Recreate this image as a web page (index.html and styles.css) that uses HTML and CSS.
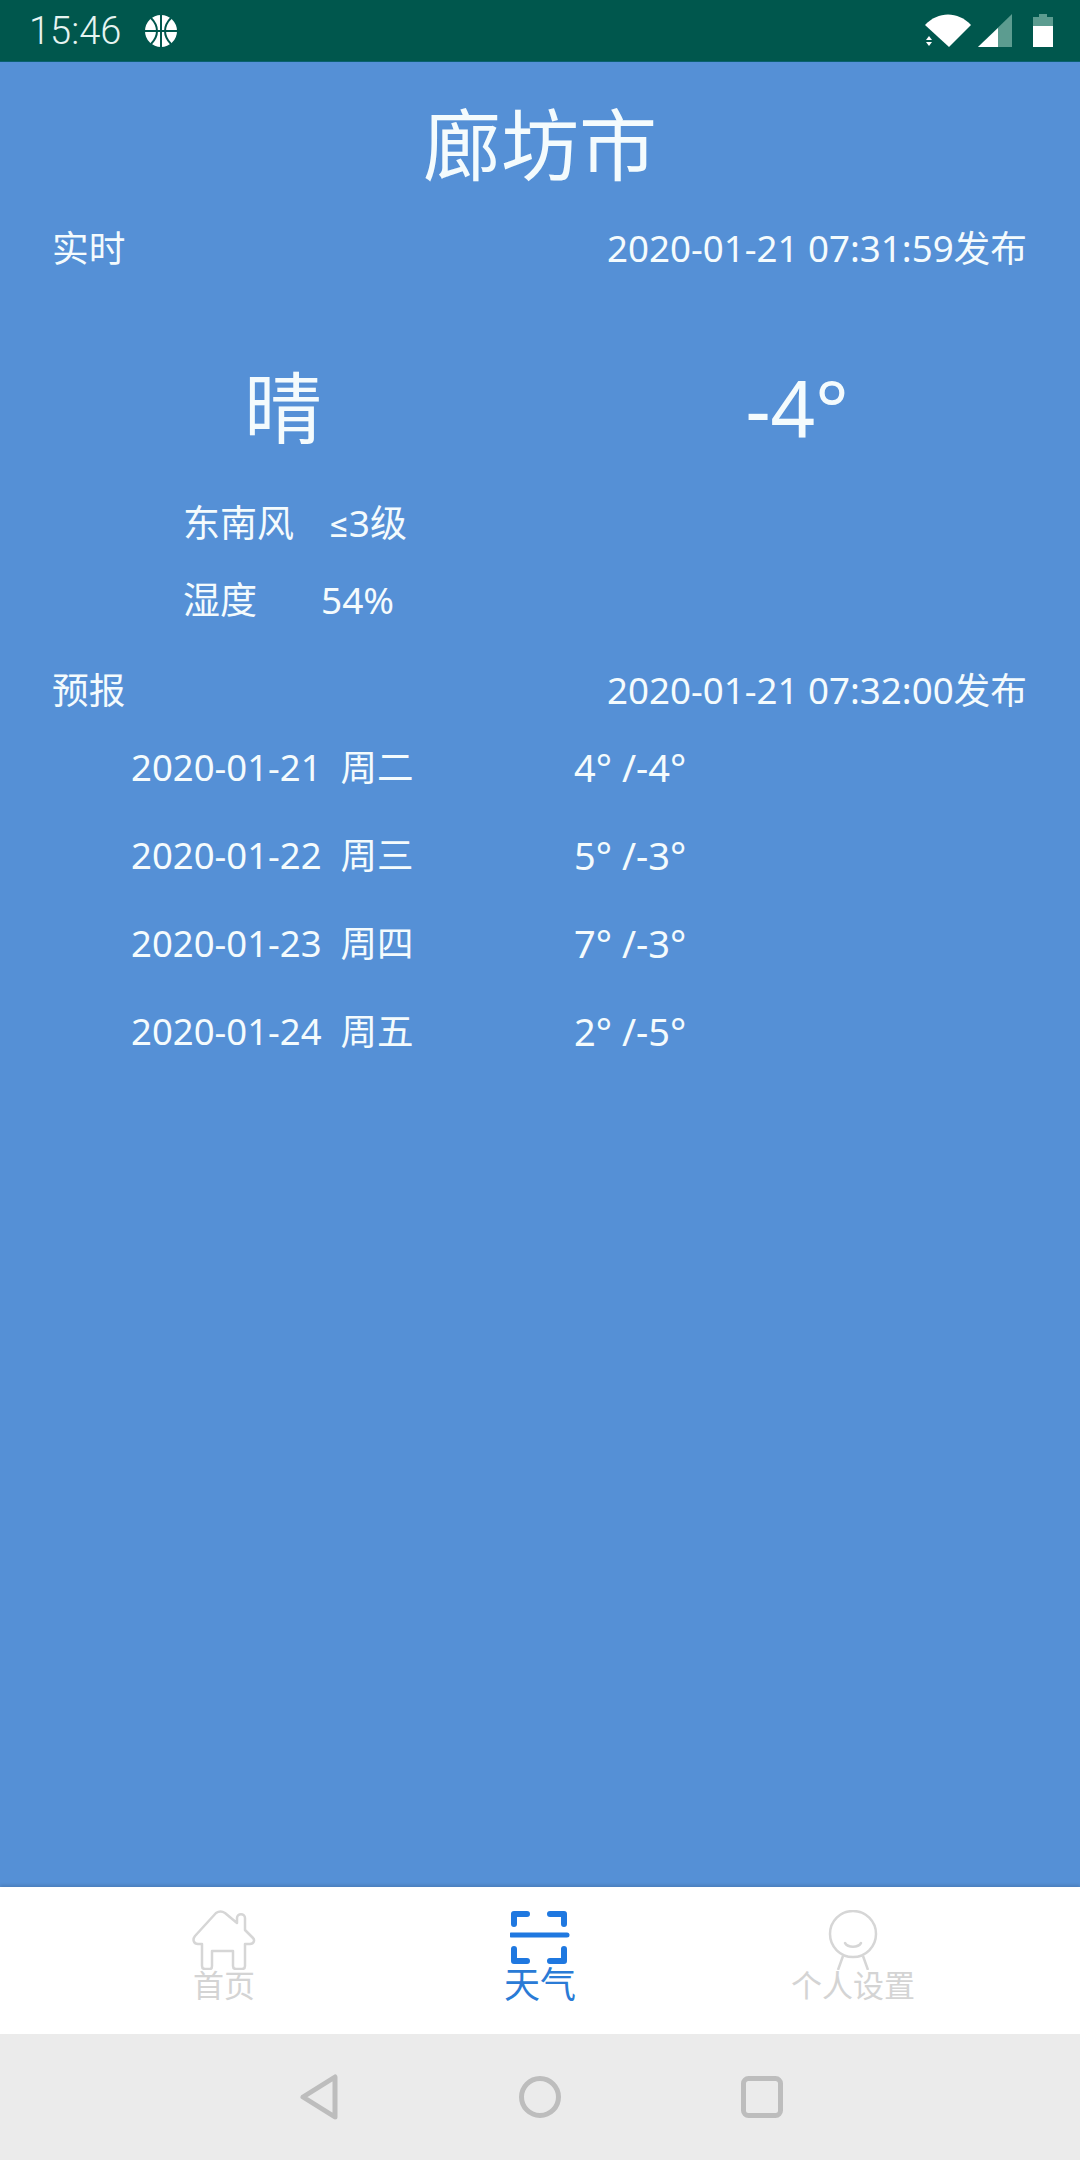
FILE: index.html
```html
<!DOCTYPE html>
<html lang="zh-CN">
<head>
    <meta charset="UTF-8">
    <meta name="viewport" content="width=device-width, initial-scale=1.0">
    <title>天气</title>
    <link rel="stylesheet" href="styles.css">
</head>
<body>
    <div class="status-bar">
        <div class="status-left">
            <span class="clock">15:46</span>
            <svg class="ball" width="32" height="32" viewBox="0 0 32 32">
                <circle cx="16" cy="16" r="16" fill="#fff"/>
                <path d="M16 0V32M0 16H32M6 3C11 8 12 12 12 16C12 20 11 24 6 29M26 3C21 8 20 12 20 16C20 20 21 24 26 29" fill="none" stroke="#00574d" stroke-width="2"/>
            </svg>
        </div>
        <div class="status-right">
            <svg class="wifi" width="46" height="33" viewBox="0 0 46 33">
                <path d="M0 11C13 -3 33 -3 46 11L24 33Z" fill="#fff"/>
                <path d="M0 25L4 20L8 25ZM0 28L8 28L4 33Z" fill="#00574d" stroke="#00574d" stroke-width="3"/>
                <path d="M1 26L4 22L7 26ZM1 28L7 28L4 32Z" fill="#fff"/>
            </svg>
            <svg class="signal" width="34" height="33" viewBox="0 0 34 33">
                <path d="M34 0V33H0Z" fill="#5c9c90"/>
                <path d="M20 14V33H0Z" fill="#fff"/>
            </svg>
            <svg class="battery" width="20" height="33" viewBox="0 0 20 33">
                <path d="M6 0H14V3H20V12H0V3H6Z" fill="#5c9c90"/>
                <rect y="12" width="20" height="21" fill="#fff"/>
            </svg>
        </div>
    </div>

    <div class="main">
        <h1 class="city">廊坊市</h1>

        <div class="head-row">
            <span>实时</span>
            <span>2020-01-21 07:31:59发布</span>
        </div>

        <div class="now">
            <div>晴</div>
            <div>-4°</div>
        </div>

        <div class="detail wind">
            <span>东南风</span>
            <span><span class="le">≤</span>3级</span>
        </div>
        <div class="detail humidity">
            <span>湿度</span>
            <span>54%</span>
        </div>

        <div class="head-row forecast-head">
            <span>预报</span>
            <span>2020-01-21 07:32:00发布</span>
        </div>

        <div class="forecast">
            <div class="day"><span class="day-date">2020-01-21&nbsp;&nbsp;周二</span><span class="day-temp">4° /-4°</span></div>
            <div class="day"><span class="day-date">2020-01-22&nbsp;&nbsp;周三</span><span class="day-temp">5° /-3°</span></div>
            <div class="day"><span class="day-date">2020-01-23&nbsp;&nbsp;周四</span><span class="day-temp">7° /-3°</span></div>
            <div class="day"><span class="day-date">2020-01-24&nbsp;&nbsp;周五</span><span class="day-temp">2° /-5°</span></div>
        </div>
    </div>

    <div class="tabbar">
        <div class="tab">
            <svg width="64" height="60" viewBox="-1 -1 64 60">
                <path d="M9 33V55C9 57 10 58 12 58H17C18 58 19 57 19 55V40H40V55C40 57 41 58 43 58H49C51 58 52 57 52 55V33H57C61 33 62 29 60 27L52 19V7C52 2 44 2 44 7V12L32 2C29 0 26 0 23 2L2 25C-1 29 1 33 5 33Z" fill="none" stroke="#d6d6d6" stroke-width="2.5" stroke-linejoin="round"/>
            </svg>
            <span class="tab-label">首页</span>
        </div>
        <div class="tab tab-active">
            <svg width="60" height="60" viewBox="1 0 60 60">
                <path d="M18 3H5V13M41 3H55V13M18 50H5V38M41 50H55V38" fill="none" stroke="#1f78e0" stroke-width="6" stroke-linejoin="round" stroke-linecap="round" transform="translate(0 1)"/>
                <path d="M2 25H58" stroke="#1f78e0" stroke-width="5" stroke-linecap="round"/>
            </svg>
            <span class="tab-label">天气</span>
        </div>
        <div class="tab tab-me">
            <svg width="60" height="60" viewBox="0 0 60 60">
                <circle cx="30" cy="24" r="23" fill="none" stroke="#d6d6d6" stroke-width="2.5"/>
                <path d="M22 33C25 38 35 38 38 33" fill="none" stroke="#d6d6d6" stroke-width="2.5" stroke-linecap="round"/>
                <path d="M20 46L15 60M40 46L45 60" fill="none" stroke="#d6d6d6" stroke-width="2.5"/>
            </svg>
            <span class="tab-label">个人设置</span>
        </div>
    </div>

    <div class="system-nav">
        <svg width="40" height="48" viewBox="0 0 40 48">
            <path d="M36 4V44L4 24Z" fill="none" stroke="#bdbdbd" stroke-width="5" stroke-linejoin="round"/>
        </svg>
        <svg width="42" height="42" viewBox="0 0 42 42">
            <circle cx="21" cy="21" r="18.5" fill="none" stroke="#bdbdbd" stroke-width="5"/>
        </svg>
        <svg width="42" height="42" viewBox="0 0 42 42">
            <rect x="2.5" y="2.5" width="37" height="37" rx="5" fill="none" stroke="#bdbdbd" stroke-width="5"/>
        </svg>
    </div>
</body>
</html>
```

FILE: styles.css
```css
* {
    box-sizing: border-box;
}

body {
    margin: 0;
    width: 1080px;
    height: 2160px;
    overflow: hidden;
    display: flex;
    flex-direction: column;
    font-family: "Noto Sans", "Noto Sans CJK SC", sans-serif;
    background-color: #5590d6;
    color: #f4fbfd;
}

.status-bar {
    height: 62px;
    background-color: #00574d;
    border-bottom: 1px solid #0a6070;
    display: flex;
    justify-content: space-between;
    align-items: center;
    padding: 0 27px 0 29px;
}

.status-left {
    display: flex;
    align-items: center;
    gap: 24px;
}

.clock {
    font-family: Roboto, sans-serif;
    font-size: 38px;
    font-weight: 300;
    color: #e6f4f1;
}

.status-right {
    display: flex;
    align-items: center;
}

.signal {
    margin-left: 7px;
}

.battery {
    margin-left: 21px;
}

.main {
    height: 1825px;
    padding-top: 43px;
}

.city {
    margin: 0;
    text-align: center;
    font-size: 78px;
    line-height: 80px;
    font-weight: 400;
}

.head-row {
    display: flex;
    justify-content: space-between;
    margin-top: 41px;
    padding: 0 53px 0 52px;
    font-size: 36.7px;
    line-height: 44px;
}

.now {
    display: grid;
    grid-template-columns: 1fr 1fr;
    margin-top: 98px;
    padding: 0 26px;
    text-align: center;
    font-size: 78px;
    line-height: 80px;
}

.detail {
    display: flex;
    height: 44px;
    margin-top: 33px;
    padding-left: 183px;
    font-size: 37px;
    line-height: 44px;
}

.wind {
    margin-top: 53px;
    gap: 36px;
}

.humidity {
    gap: 64px;
}

.le {
    font-family: Roboto, sans-serif;
}

.forecast-head {
    margin-top: 46px;
}

.forecast {
    display: flex;
    flex-direction: column;
    gap: 44px;
    margin-top: 33px;
    padding-left: 131px;
    font-size: 36.5px;
    line-height: 44px;
}

.day {
    display: flex;
}

.day-date {
    width: 443px;
}

.day-temp {
    font-size: 38px;
}

.tabbar {
    height: 147px;
    background-color: #fff;
    box-shadow: 0 -2px 3px rgba(0, 0, 0, 0.12);
    display: grid;
    grid-template-columns: repeat(3, 316px);
    padding: 23px 66px 0;
}

.tab {
    display: flex;
    flex-direction: column;
    align-items: center;
    color: #d4d4d4;
    font-size: 31px;
    line-height: 36px;
}

.tab-label {
    margin-top: -3px;
}

.tab-active {
    color: #2a7bd6;
    font-size: 36px;
}

.tab-me {
    transform: translateX(-3px);
}

.tab svg {
    display: block;
}

.system-nav {
    flex: 1;
    background-color: #ebebeb;
    display: flex;
    justify-content: center;
    align-items: center;
    gap: 180px;
    padding-left: 2px;
}
```
